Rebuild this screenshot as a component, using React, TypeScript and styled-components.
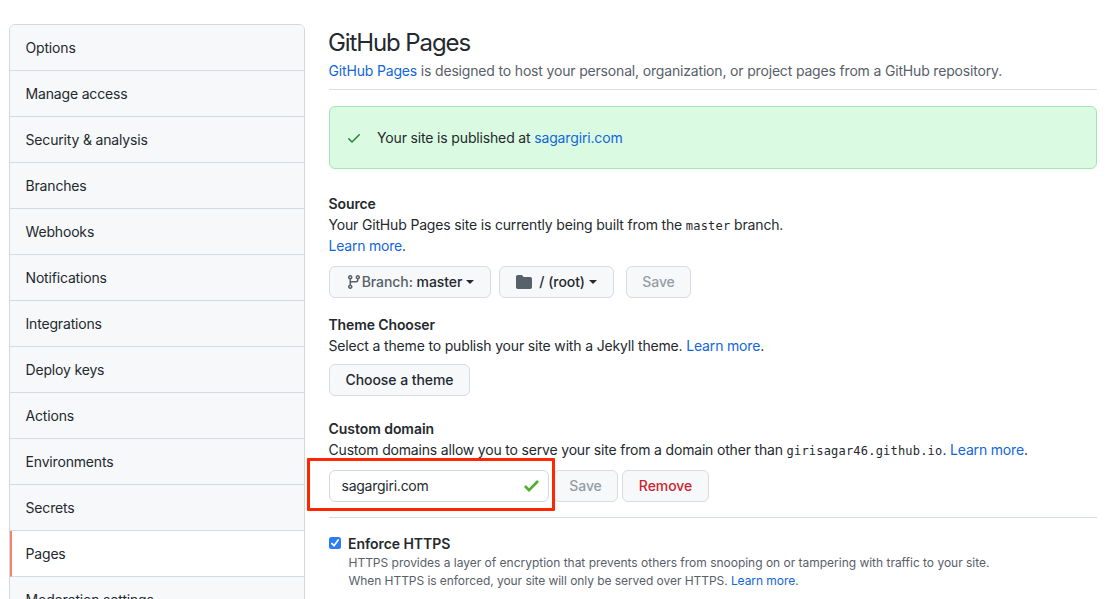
import React from "react";
import styled, { createGlobalStyle } from "styled-components";

const GlobalStyle = createGlobalStyle`
  *, *::before, *::after { box-sizing: border-box; }
  html, body { margin: 0; height: 100%; overflow: hidden; background: #fff; }
  body {
    font: 14px/21px Inter, "Liberation Sans", sans-serif;
    color: #24292e;
  }
  h2, h4, p { margin: 0; }
`;

const Page = styled.div`
  display: flex;
  align-items: flex-start;
  gap: 24px;
  height: 599px;
  padding: 24px 22px 0 9px;
  overflow: hidden;
`;

const Sidebar = styled.nav`
  flex: 0 0 296px;
  border: 1px solid #d1d8e0;
  border-radius: 6px;
  overflow: hidden;
`;

const MenuItem = styled.a<{ $active?: boolean }>`
  display: flex;
  align-items: center;
  height: 46px;
  padding-left: ${(p) => (p.$active ? 13.5 : 15.5)}px;
  border-left: ${(p) => (p.$active ? "2px solid #f9826c" : "0")};
  border-bottom: 1px solid #d5dbe2;
  background: ${(p) => (p.$active ? "#fff" : "#f6f8fa")};
`;

const Main = styled.main`
  flex: 1;
  min-width: 0;
`;

const Header = styled.header`
  height: 66px;
  padding-top: 1px;
  border-bottom: 1px solid #d8dce3;
`;

const Title = styled.h2`
  font-size: 24px;
  font-weight: 400;
  line-height: 36px;
  margin-left: -1px;
`;

const Subtitle = styled.p`
  margin: -1px 0 0 -0.5px;
  color: #586069;
`;

const Copy = styled.span<{ $track?: number }>`
  letter-spacing: ${(p) => p.$track ?? -0.17}px;
  white-space: nowrap;
`;

const Link = styled.a`
  color: #1266dc;
`;

const Code = styled.code`
  font: 12px/1 "DejaVu Sans Mono", "Liberation Mono", monospace;
  letter-spacing: 0.2px;
`;

const Flash = styled.div`
  display: flex;
  align-items: center;
  height: 63px;
  margin: 16px 0 24px;
  padding-left: 16px;
  gap: 15px;
  border: 1px solid #a4e5b4;
  border-radius: 6px;
  background: #dafbe1;
`;

const Section = styled.section<{ $gap: number }>`
  margin-bottom: ${(p) => p.$gap}px;
`;

const Heading = styled.h4`
  margin-left: -0.5px;
  font-size: 14px;
  font-weight: 600;
  line-height: 21px;
`;

const Paragraph = styled.p`
  height: 21px;
  margin-left: -0.5px;
`;

const Controls = styled.div<{ $top: number }>`
  display: flex;
  margin-top: ${(p) => p.$top}px;
`;

const Button = styled.button<{ $width: number; $left?: number; $tone?: string }>`
  display: flex;
  align-items: center;
  justify-content: center;
  width: ${(p) => p.$width}px;
  height: 32px;
  margin: 0 0 0 ${(p) => p.$left ?? 0}px;
  padding: 0;
  border: 1px solid #d9dce0;
  border-radius: 6px;
  background: #f6f8fa;
  color: ${(p) => p.$tone ?? "#24292e"};
  font: 500 14px/20px Inter, sans-serif;
  letter-spacing: -0.07px;
  white-space: pre;
`;

const Muted = styled.span`
  color: #586069;
`;

const Caret = styled.span`
  margin-left: 4px;
  border: 4px solid transparent;
  border-top-color: currentColor;
  border-bottom: 0;
`;

const Field = styled.div`
  position: relative;
  display: flex;
  align-items: center;
  justify-content: space-between;
  width: 220px;
  height: 32px;
  padding: 0 9px 1px 11.5px;
  border: 1px solid #d1d8e0;
  border-radius: 6px;
  background: #fff;
`;

const Highlight = styled.div`
  position: absolute;
  left: -23px;
  top: -13px;
  width: 248px;
  height: 53px;
  border: 3px solid #ff2600;
  border-radius: 1px;
`;

const Enforce = styled.div`
  display: flex;
  gap: 7.5px;
  padding-top: 15px;
  border-top: 1px solid #d5dbe2;
`;

const Checkbox = styled.span`
  display: flex;
  flex: 0 0 12px;
  height: 12px;
  margin-top: 4px;
  border-radius: 2.5px;
  background: #2b7df6;
`;

const Note = styled.p`
  color: #586069;
  font-size: 12px;
  line-height: 18px;
`;

const BRANCH =
  "M11.75 2.5a.75.75 0 100 1.5.75.75 0 000-1.5zm-2.25.75a2.25 2.25 0 113 2.122V6A2.5 2.5 0 0110 8.5H6a1 1 0 00-1 1v1.128a2.251 2.251 0 11-1.5 0V5.372a2.25 2.25 0 111.5 0v1.836A2.492 2.492 0 016 7h4a1 1 0 001-1v-.628A2.25 2.25 0 019.5 3.25zM4.25 12a.75.75 0 100 1.5.75.75 0 000-1.5zM3.5 3.25a.75.75 0 111.5 0 .75.75 0 01-1.5 0z";
const CHECK =
  "M13.78 4.22a.75.75 0 010 1.06l-7.25 7.25a.75.75 0 01-1.06 0L2.22 9.28a.75.75 0 011.06-1.06L6 10.94l6.72-6.72a.75.75 0 011.06 0z";
const FOLDER =
  "M1.75 1A1.75 1.75 0 000 2.75v10.5C0 14.216.784 15 1.75 15h12.5A1.75 1.75 0 0016 13.25v-8.5A1.75 1.75 0 0014.25 3h-6.5a.25.25 0 01-.2-.1l-.9-1.2c-.33-.44-.85-.7-1.4-.7h-3.5z";

function Icon({ d, fill }: { d: string; fill: string }) {
  return (
    <svg width="16" height="16" viewBox="0 0 16 16" fill={fill}>
      <path fillRule="evenodd" d={d} />
    </svg>
  );
}

const menu = [
  "Options",
  "Manage access",
  "Security & analysis",
  "Branches",
  "Webhooks",
  "Notifications",
  "Integrations",
  "Deploy keys",
  "Actions",
  "Environments",
  "Secrets",
  "Pages",
  "Moderation settings",
];

export default function App() {
  return (
    <>
      <GlobalStyle />
      <Page>
        <Sidebar>
          {menu.map((label) => (
            <MenuItem key={label} $active={label === "Pages"}>
              <Copy>{label}</Copy>
            </MenuItem>
          ))}
        </Sidebar>
        <Main>
          <Header>
            <Title>
              <Copy $track={-1.1}>GitHub Pages</Copy>
            </Title>
            <Subtitle>
              <Copy>
                <Link>GitHub Pages</Link> is designed to host your personal, organization, or project pages from a
                GitHub repository.
              </Copy>
            </Subtitle>
          </Header>
          <Flash>
            <Icon d={CHECK} fill="#22863a" />
            <Copy $track={-0.155}>
              Your site is published at <Link>sagargiri.com</Link>
            </Copy>
          </Flash>
          <Section $gap={16}>
            <Heading>
              <Copy $track={-0.1}>Source</Copy>
            </Heading>
            <Paragraph>
              <Copy>
                Your GitHub Pages site is currently being built from the <Code>master</Code> branch.
              </Copy>
            </Paragraph>
            <Paragraph>
              <Copy $track={-0.22}>
                <Link>Learn more</Link>.
              </Copy>
            </Paragraph>
            <Controls $top={10}>
              <Button $width={162}>
                <Icon d={BRANCH} fill="#586069" />
                <Muted>Branch: </Muted>
                <span>master</span>
                <Caret />
              </Button>
              <Button $width={115} $left={8}>
                <Icon d={FOLDER} fill="#586069" />
                <span>{"  / (root)"}</span>
                <Caret />
              </Button>
              <Button $width={65} $left={12} $tone="#949da6">
                Save
              </Button>
            </Controls>
          </Section>
          <Section $gap={22}>
            <Heading>
              <Copy $track={-0.12}>Theme Chooser</Copy>
            </Heading>
            <Paragraph>
              <Copy $track={-0.165}>
                Select a theme to publish your site with a Jekyll theme. <Link>Learn more</Link>.
              </Copy>
            </Paragraph>
            <Controls $top={8}>
              <Button $width={141}>Choose a theme</Button>
            </Controls>
          </Section>
          <Section $gap={15}>
            <Heading>
              <Copy $track={-0.05}>Custom domain</Copy>
            </Heading>
            <Paragraph>
              <Copy $track={-0.182}>
                Custom domains allow you to serve your site from a domain other than{" "}
                <Code>girisagar46.github.io</Code>. <Link>Learn more</Link>.
              </Copy>
            </Paragraph>
            <Controls $top={10}>
              <Field>
                <Copy $track={-0.25}>sagargiri.com</Copy>
                <svg width="15" height="12" viewBox="0 3.5 12 9.5" fill="#4fae33">
                  <path d="M12 5l-8 8-4-4 1.5-1.5L4 10l6.5-6.5z" />
                </svg>
                <Highlight />
              </Field>
              <Button $width={65} $left={4} $tone="#949da6">
                Save
              </Button>
              <Button $width={87} $left={4} $tone="#cb2431">
                Remove
              </Button>
            </Controls>
          </Section>
          <Enforce>
            <Checkbox>
              <svg width="12" height="12" viewBox="0 0 12 12" fill="none" stroke="#fff" strokeWidth="1.7">
                <path d="M2.8 6.4 5 8.8 9.2 3" strokeLinecap="round" strokeLinejoin="round" />
              </svg>
            </Checkbox>
            <div>
              <Heading>
                <Copy $track={-0.05}>Enforce HTTPS</Copy>
              </Heading>
              <Note>
                <Copy $track={-0.015}>
                  HTTPS provides a layer of encryption that prevents others from snooping on or tampering with traffic
                  to your site.
                </Copy>
              </Note>
              <Note>
                <Copy $track={-0.058}>
                  When HTTPS is enforced, your site will only be served over HTTPS. <Link>Learn more</Link>.
                </Copy>
              </Note>
            </div>
          </Enforce>
        </Main>
      </Page>
    </>
  );
}
